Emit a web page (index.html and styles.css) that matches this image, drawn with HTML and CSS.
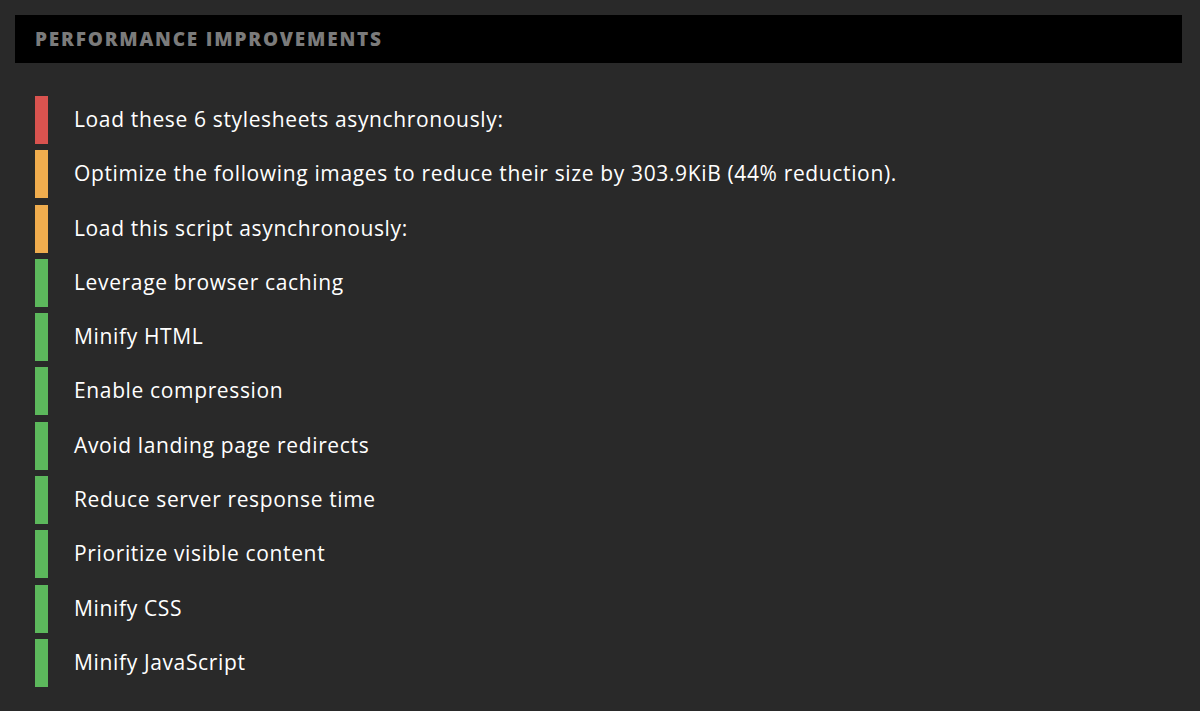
FILE: index.html
```html
<!DOCTYPE html>
<html lang="en">

<head>
  <meta charset="UTF-8">
  <title>Performance Improvements</title>
  <link rel="stylesheet" href="styles.css">
</head>

<body>

  <!-- Section header -->
  <div class="section-title">PERFORMANCE IMPROVEMENTS</div>

  <!-- Recommendations -->
  <ul class="improvements">
    <li class="item bad">Load these 6 stylesheets asynchronously:</li>
    <li class="item warn">Optimize the following images to reduce their size by 303.9KiB (44% reduction).</li>
    <li class="item warn">Load this script asynchronously:</li>
    <li class="item good">Leverage browser caching</li>
    <li class="item good">Minify HTML</li>
    <li class="item good">Enable compression</li>
    <li class="item good">Avoid landing page redirects</li>
    <li class="item good">Reduce server response time</li>
    <li class="item good">Prioritize visible content</li>
    <li class="item good">Minify CSS</li>
    <li class="item good">Minify JavaScript</li>
  </ul>

</body>

</html>
```

FILE: styles.css
```css
body {
  margin: 0;
  padding: 15px 18px 0 15px;
  background: #292929;
  font-family: "Open Sans", sans-serif;
  color: #fff;
}

.section-title {
  background: #000;
  height: 48px;
  line-height: 48px;
  padding: 0 20px;
  color: #7b7b7b;
  font-size: 19px;
  font-weight: 800;
  letter-spacing: 1.8px;
}

.improvements {
  list-style: none;
  margin: 33px 0 0 20px;
  padding: 0;
  display: flex;
  flex-direction: column;
  gap: 6.3px;
}

.item {
  height: 48px;
  line-height: 46px;
  border-left: 13px solid #5cb85c;
  padding-left: 26px;
  font-size: 21px;
  font-weight: 500;
  letter-spacing: 0.64px;
}

.item.bad {
  border-left-color: #d9534f;
}

.item.warn {
  border-left-color: #f0ad4e;
}

.item.good {
  border-left-color: #5cb85c;
}
```
